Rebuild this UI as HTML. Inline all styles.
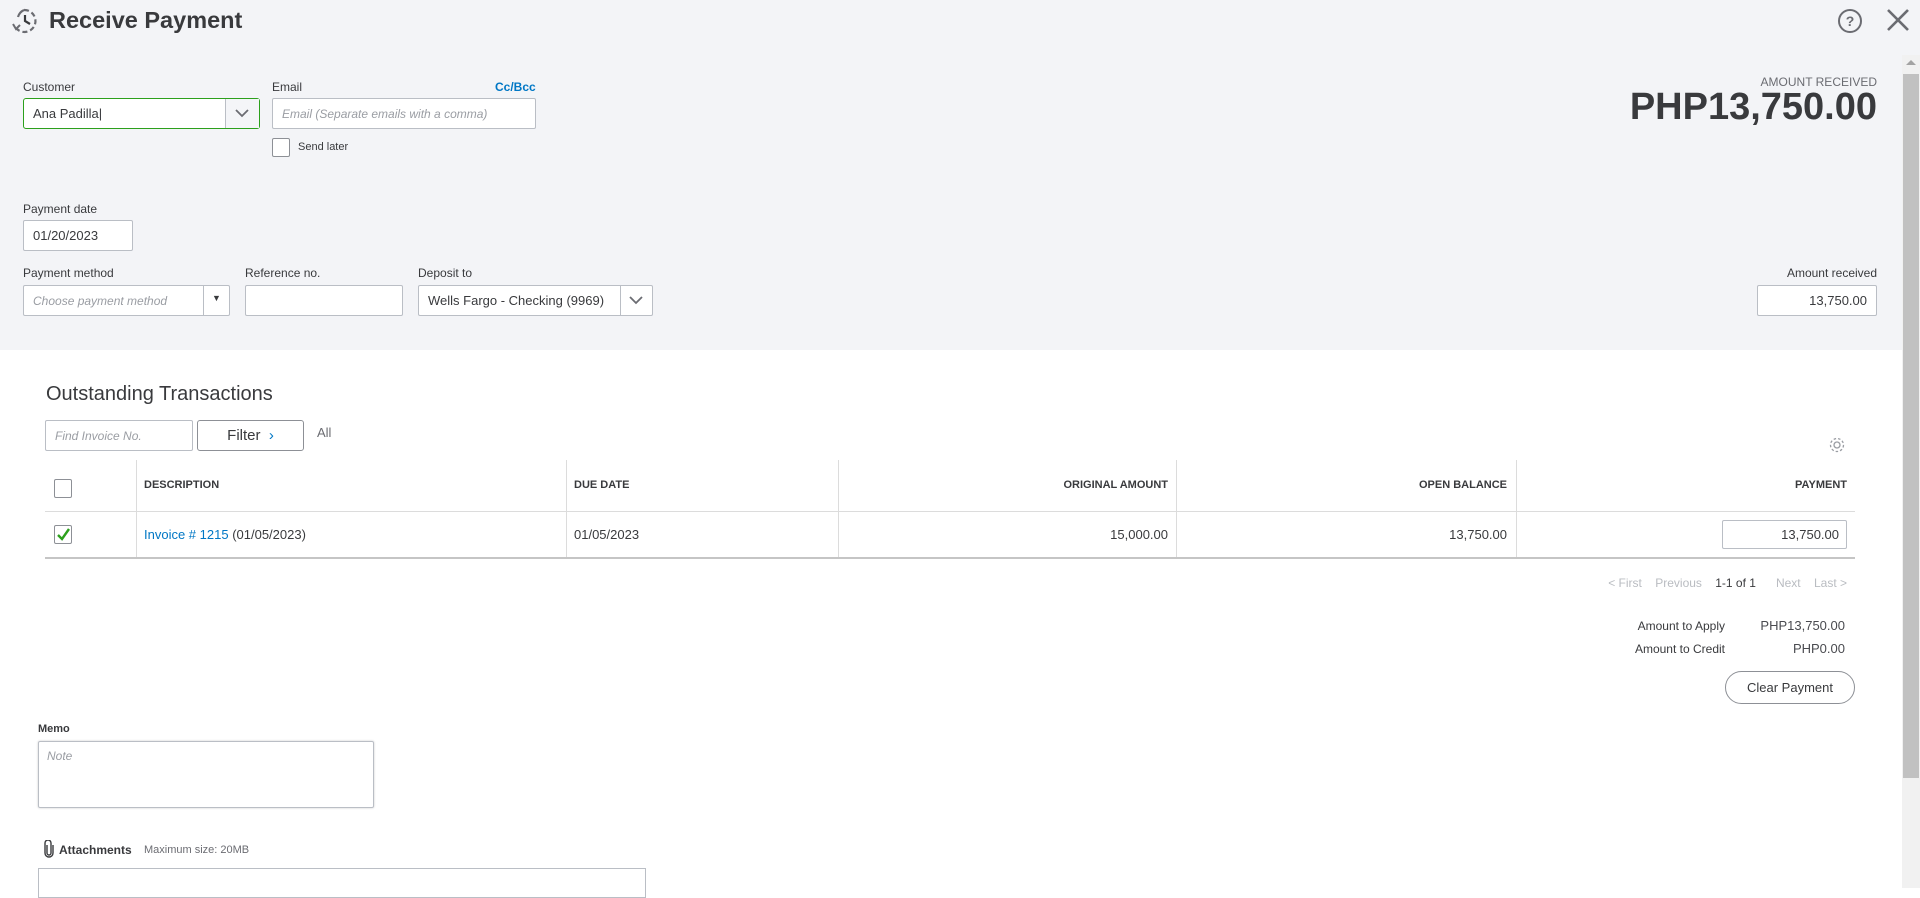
<!DOCTYPE html>
<html><head><meta charset="utf-8"><style>
*{box-sizing:border-box;margin:0;padding:0}
body{width:1920px;height:888px;overflow:hidden;background:#fff;font-family:"Liberation Sans",sans-serif;color:#393a3d;position:relative}
.a{position:absolute}
.top{left:0;top:0;width:1920px;height:350px;background:#f3f4f7}
.lbl{font-size:12px;color:#393a3d}
.inp{background:#fff;border:1px solid #babec5;border-radius:2px;font-size:13px;padding-left:9px;display:flex;align-items:center}
.ph{color:#9a9da3;font-style:italic}
.hd{font-size:11px;font-weight:bold;color:#393a3d}
.vl{width:1px;background:#dcdcdc}
.cb{width:18px;height:19px;border:1px solid #8d9096;border-radius:2px;background:#fff}
</style></head><body>
<div class="a top"></div>
<svg class="a" style="left:10px;top:7px" width="30" height="28" viewBox="0 0 30 28"><path d="M14 3 A11 11 0 1 1 6 21" fill="none" stroke="#6b6c72" stroke-width="2.2" stroke-dasharray="5 3"/><path d="M8 10 A11 11 0 0 1 14 3" fill="none" stroke="#6b6c72" stroke-width="2.2"/><path d="M15 8 L15 14 L20 17" fill="none" stroke="#393a3d" stroke-width="2.2"/><path d="M3 17 L6 22 L10 18" fill="none" stroke="#6b6c72" stroke-width="2"/></svg>
<div class="a" style="left:49px;top:7px;font-size:23.5px;font-weight:bold;color:#393a3d">Receive Payment</div>
<svg class="a" style="left:1837px;top:8px" width="26" height="26" viewBox="0 0 26 26"><circle cx="13" cy="13" r="11" fill="none" stroke="#6b6c72" stroke-width="2"/><text x="13" y="18" text-anchor="middle" font-size="14" font-family="Liberation Sans" font-weight="bold" fill="#6b6c72">?</text></svg>
<svg class="a" style="left:1886px;top:8px" width="24" height="24" viewBox="0 0 24 24"><path d="M2 2L22 22M22 2L2 22" stroke="#6b6c72" stroke-width="2.6"/></svg>

<div class="a lbl" style="left:23px;top:80px">Customer</div>
<div class="a inp" style="left:23px;top:98px;width:237px;height:31px;border:1px solid #2ca01c;border-radius:3px">Ana Padilla|</div>
<div class="a" style="left:225px;top:99px;width:34px;height:29px;border-left:1px solid #babec5;background:#f4f5f8"></div>
<svg class="a" style="left:234px;top:107px" width="16" height="12"><path d="M2 3L8 9L14 3" fill="none" stroke="#6b6c72" stroke-width="1.8"/></svg>
<div class="a lbl" style="left:272px;top:80px">Email</div>
<div class="a" style="left:495px;top:80px;font-size:12px;font-weight:bold;color:#0077c5">Cc/Bcc</div>
<div class="a inp ph" style="left:272px;top:98px;width:264px;height:31px;font-size:12px">Email (Separate emails with a comma)</div>
<div class="a cb" style="left:272px;top:138px"></div>
<div class="a" style="left:298px;top:141px;font-size:11px">Send later</div>

<div class="a lbl" style="left:23px;top:202px">Payment date</div>
<div class="a inp" style="left:23px;top:220px;width:110px;height:31px">01/20/2023</div>

<div class="a lbl" style="left:23px;top:266px">Payment method</div>
<div class="a inp ph" style="left:23px;top:285px;width:207px;height:31px;font-size:12px">Choose payment method</div>
<div class="a" style="left:203px;top:286px;width:1px;height:29px;background:#babec5"></div>
<div class="a" style="left:212px;top:293px;font-size:9px;color:#393a3d">▼</div>
<div class="a lbl" style="left:245px;top:266px">Reference no.</div>
<div class="a inp" style="left:245px;top:285px;width:158px;height:31px"></div>
<div class="a lbl" style="left:418px;top:266px">Deposit to</div>
<div class="a inp" style="left:418px;top:285px;width:235px;height:31px">Wells Fargo - Checking (9969)</div>
<div class="a" style="left:620px;top:286px;width:1px;height:29px;background:#babec5"></div>
<svg class="a" style="left:628px;top:294px" width="16" height="12"><path d="M2 3L8 9L14 3" fill="none" stroke="#6b6c72" stroke-width="1.8"/></svg>

<div class="a" style="right:43px;top:75px;font-size:12px;color:#6b6c72">AMOUNT RECEIVED</div>
<div class="a" style="right:43px;top:86px;font-size:38px;font-weight:bold;color:#393a3d">PHP13,750.00</div>
<div class="a lbl" style="right:43px;top:266px">Amount received</div>
<div class="a inp" style="left:1757px;top:285px;width:120px;height:31px;justify-content:flex-end;padding-right:9px">13,750.00</div>

<div class="a" style="left:1902px;top:55px;width:18px;height:833px;background:#f1f1f1"></div>
<div class="a" style="left:1906px;top:60px;width:0;height:0;border-left:5px solid transparent;border-right:5px solid transparent;border-bottom:5px solid #a3a3a3"></div>
<div class="a" style="left:1903px;top:74px;width:16px;height:704px;background:#c1c1c1"></div>

<div class="a" style="left:46px;top:383px;font-size:20px;color:#393a3d">Outstanding Transactions</div>
<div class="a inp ph" style="left:45px;top:420px;width:148px;height:31px;font-size:12px">Find Invoice No.</div>
<div class="a" style="left:197px;top:420px;width:107px;height:31px;border:1px solid #8d9096;border-radius:3px;font-size:15px;display:flex;align-items:center;justify-content:center;background:#fff">Filter&nbsp;&nbsp;<span style="color:#0077c5">›</span></div>
<div class="a" style="left:317px;top:425px;font-size:13px;color:#6b6c72">All</div>
<svg class="a" style="left:1828px;top:436px" width="18" height="18" viewBox="0 0 18 18"><circle cx="9" cy="9" r="3" fill="none" stroke="#9a9da3" stroke-width="1.3"/><circle cx="9" cy="9" r="6.5" fill="none" stroke="#9a9da3" stroke-width="1.3" stroke-dasharray="2.5 2"/></svg>

<div class="a" style="left:45px;top:511px;width:1810px;height:1px;background:#dcdcdc"></div>
<div class="a" style="left:45px;top:557px;width:1810px;height:2px;background:#c5c5c5"></div>
<div class="a vl" style="left:136px;top:460px;height:97px"></div>
<div class="a vl" style="left:566px;top:460px;height:97px"></div>
<div class="a vl" style="left:838px;top:460px;height:97px"></div>
<div class="a vl" style="left:1176px;top:460px;height:97px"></div>
<div class="a vl" style="left:1516px;top:460px;height:97px"></div>
<div class="a cb" style="left:54px;top:479px"></div>
<div class="a hd" style="left:144px;top:479px">DESCRIPTION</div>
<div class="a hd" style="left:574px;top:479px">DUE DATE</div>
<div class="a hd" style="right:752px;top:479px">ORIGINAL AMOUNT</div>
<div class="a hd" style="right:413px;top:479px">OPEN BALANCE</div>
<div class="a hd" style="right:73px;top:479px">PAYMENT</div>
<div class="a cb" style="left:54px;top:525px"></div>
<svg class="a" style="left:56px;top:527px" width="15" height="15"><path d="M2 8L6 12L13 2" fill="none" stroke="#2ca01c" stroke-width="2.4"/></svg>
<div class="a" style="left:144px;top:527px;font-size:13px"><span style="color:#0077c5">Invoice # 1215</span> (01/05/2023)</div>
<div class="a" style="left:574px;top:527px;font-size:13px">01/05/2023</div>
<div class="a" style="right:752px;top:527px;font-size:13px">15,000.00</div>
<div class="a" style="right:413px;top:527px;font-size:13px">13,750.00</div>
<div class="a inp" style="left:1722px;top:520px;width:125px;height:29px;justify-content:flex-end;padding-right:7px">13,750.00</div>

<div class="a" style="right:73px;top:576px;font-size:12px;color:#b9bcc1;word-spacing:0">&lt; First&nbsp;&nbsp;&nbsp;&nbsp;Previous&nbsp;&nbsp;&nbsp;&nbsp;<span style="color:#393a3d">1-1 of 1</span>&nbsp;&nbsp;&nbsp;&nbsp;&nbsp;&nbsp;Next&nbsp;&nbsp;&nbsp;&nbsp;Last &gt;</div>
<div class="a" style="right:195px;top:619px;font-size:12px">Amount to Apply</div>
<div class="a" style="right:75px;top:618px;font-size:13px;color:#4a4b50">PHP13,750.00</div>
<div class="a" style="right:195px;top:642px;font-size:12px">Amount to Credit</div>
<div class="a" style="right:75px;top:641px;font-size:13px;color:#4a4b50">PHP0.00</div>
<div class="a" style="left:1725px;top:671px;width:130px;height:33px;border:1px solid #8d9096;border-radius:17px;font-size:13px;display:flex;align-items:center;justify-content:center">Clear Payment</div>

<div class="a lbl" style="left:38px;top:723px;font-weight:bold;font-size:11px">Memo</div>
<div class="a" style="left:38px;top:741px;width:336px;height:67px;border:1px solid #babec5;border-radius:2px;box-shadow:0 0 2px #ccc;padding:7px 8px;font-size:12px;color:#9a9da3;font-style:italic">Note</div>
<svg class="a" style="left:43px;top:840px" width="12" height="18" viewBox="0 0 12 18"><path d="M4 5V13A2 2 0 0 0 8 13V3A3 3 0 0 0 2 3V13A4 4 0 0 0 10 13V5" fill="none" stroke="#393a3d" stroke-width="1.4"/></svg>
<div class="a" style="left:59px;top:843px;font-size:12px;font-weight:bold">Attachments</div>
<div class="a" style="left:144px;top:844px;font-size:11px;color:#6b6c72">Maximum size: 20MB</div>
<div class="a" style="left:38px;top:868px;width:608px;height:30px;border:1px solid #babec5"></div>
</body></html>
